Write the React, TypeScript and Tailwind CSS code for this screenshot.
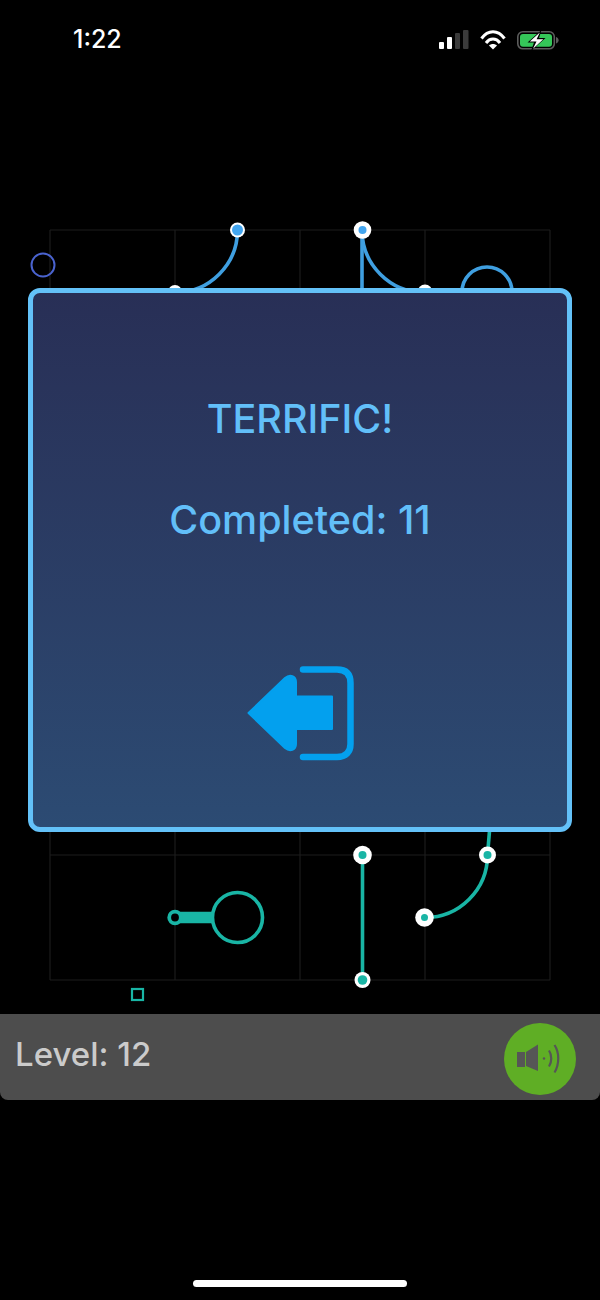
const GRID_X = [50, 175, 300, 425, 550];
const GRID_Y = [230, 355, 480, 605, 730, 855, 980];

function SignalIcon() {
  return (
    <svg width="31" height="20" viewBox="0 0 31 20" className="block">
      <rect x="1" y="12" width="5" height="7" rx="1" fill="#fff" />
      <rect x="9" y="7" width="5" height="12" rx="1" fill="#fff" />
      <rect x="17" y="3" width="5" height="16" rx="1" fill="#3a3a3a" />
      <rect x="25" y="0" width="5.500" height="19" rx="1" fill="#3a3a3a" />
    </svg>
  );
}

function WifiIcon() {
  return (
    <svg width="26" height="20" viewBox="0 0 26 20" fill="none" className="block">
      <path d="M1.500 8.500C8 -0.500 18 -0.500 24.500 8.500" stroke="#fff" strokeWidth="3" />
      <path d="M6 13C10 7.800 16 7.800 20 13" stroke="#fff" strokeWidth="3" />
      <path d="M9 15.500L13 19.500L17 15.500C14.800 13.500 11.200 13.500 9 15.500Z" fill="#fff" />
    </svg>
  );
}

function BatteryIcon() {
  return (
    <svg width="42" height="22" viewBox="0 0 42 22" fill="none" className="block">
      <rect x="0.800" y="1.800" width="36.500" height="17" rx="5" stroke="#5c5c5c" strokeWidth="1.600" />
      <rect x="3" y="4" width="32" height="12.800" rx="3" fill="#35c759" />
      <path d="M39 7v6.500c1.600-.4 2.600-1.600 2.600-3.200s-1-2.900-2.600-3.300Z" fill="#5c5c5c" />
      <path d="M24.500 0L10.500 12.500h6.500L14 21L28.500 8h-6.500L24.500 0Z" fill="#000" />
      <path d="M22.800 2.500L12.800 11.500h6.700L16 18.800L26.300 9.200h-6.700L22.800 2.500Z" fill="#fff" />
    </svg>
  );
}

function Node({ x, y, r, core, coreR }: { x: number; y: number; r: number; core: string; coreR: number }) {
  return (
    <g>
      <circle cx={x} cy={y} r={r} fill="#fff" />
      <circle cx={x} cy={y} r={coreR} fill={core} />
    </g>
  );
}

function Board() {
  const blue = "#3f9fe0";
  const teal = "#19b5a5";
  return (
    <svg width="600" height="954" viewBox="0 60 600 954" fill="none" className="block">
      {GRID_X.map((x) => (
        <line key={x} x1={x} y1={230} x2={x} y2={980} stroke="#1c1c1c" strokeWidth="1.200" />
      ))}
      {GRID_Y.map((y) => (
        <line key={y} x1={50} y1={y} x2={550} y2={y} stroke="#1c1c1c" strokeWidth="1.200" />
      ))}

      <circle cx="43" cy="265" r="11.500" stroke="#4a63cf" strokeWidth="2" />
      <path d="M237.500 230A62.500 62.500 0 0 1 175 292.500" stroke={blue} strokeWidth="3.600" />
      <path d="M362 230V292" stroke={blue} strokeWidth="3.600" />
      <path d="M362 230A62.500 62.500 0 0 0 424.500 292.500" stroke={blue} strokeWidth="3.600" />
      <circle cx="487" cy="292" r="25" stroke={blue} strokeWidth="3.600" />
      <circle cx="175" cy="292" r="7" fill="#fff" />
      <circle cx="425" cy="292" r="7.500" fill="#fff" />
      <Node x={237.500} y={230} r={7.500} core="#42a5ef" coreR={5.500} />
      <Node x={362.500} y={230} r={8.800} core="#42a5ef" coreR={4} />

      <path d="M362.500 855V980" stroke={teal} strokeWidth="3.600" />
      <path d="M490 825L487.500 855" stroke={teal} strokeWidth="3.600" />
      <path d="M487.500 855A62.500 62.500 0 0 1 425 917.500" stroke={teal} strokeWidth="3.600" />
      <path d="M175 917.500H213" stroke={teal} strokeWidth="11.500" />
      <circle cx="237.500" cy="917.500" r="25" stroke={teal} strokeWidth="3.600" />
      <circle cx="175" cy="917.500" r="5.800" fill="#000" stroke={teal} strokeWidth="3.800" />
      <Node x={362.500} y={855} r={9.300} core={teal} coreR={4} />
      <Node x={487.500} y={855} r={8.500} core={teal} coreR={4} />
      <Node x={424.500} y={917.500} r={9.300} core={teal} coreR={3.500} />
      <Node x={362.500} y={980} r={8} core={teal} coreR={4.800} />
      <rect x="132" y="989" width="11" height="11" stroke={teal} strokeWidth="2.200" />
    </svg>
  );
}

function ExitIcon() {
  return (
    <svg width="110" height="102" viewBox="0 0 110 102" fill="none" className="block">
      <path
        d="M1.500 53L38 18C43 13.500 49 16 49 22V36.500H85V69H49V84C49 90 43 92 38 88Z"
        fill="#03a0ee"
        stroke="#03a0ee"
        strokeWidth="2"
        strokeLinejoin="round"
      />
      <path
        d="M56 9.500H90C99 9.500 103.500 14 103.500 23V84C103.500 92 99 97 90 97H56"
        stroke="#03a0ee"
        strokeWidth="6.500"
        strokeLinecap="round"
      />
    </svg>
  );
}

function SoundIcon() {
  return (
    <svg width="44" height="30" viewBox="0 0 44 30" fill="none" className="block">
      <rect x="0" y="8" width="8" height="15" fill="#565656" />
      <path d="M9 8L21 0.500V27L9 22Z" fill="#565656" />
      <circle cx="27" cy="14.500" r="1.200" fill="#565656" />
      <path d="M32 6.500C35 11 35 18 32 22.500" stroke="#565656" strokeWidth="2.200" />
      <path d="M37.500 1C42.500 8.500 42.500 20 37.500 28.500" stroke="#565656" strokeWidth="2.200" />
    </svg>
  );
}

export default function App() {
  return (
    <div className="relative h-[1300px] w-[600px] overflow-hidden bg-black font-['Inter',sans-serif]">
      <div className="flex h-[60px] items-start justify-between pl-[73px] pr-[41px] pt-[26px]">
        <span className="text-[25px] leading-[27px] font-medium text-white">1:22</span>
        <div className="mt-[4px] flex items-start">
          <SignalIcon />
          <div className="ml-[11px]">
            <WifiIcon />
          </div>
          <div className="ml-[11px]">
            <BatteryIcon />
          </div>
        </div>
      </div>

      <Board />

      <div className="flex h-[86px] items-start justify-between rounded-b-[8px] bg-[#4d4d4d] pl-[15px] pr-[24px] pt-[9px]">
        <span className="mt-[11px] text-[33px] leading-[40px] font-[550] text-[#cbcbcb]">Level: 12</span>
        <div className="flex h-[72px] w-[72px] items-center justify-center rounded-full bg-[#5fae25] pr-[2px]">
          <SoundIcon />
        </div>
      </div>

      <div className="absolute left-[28px] top-[288px] flex h-[544px] w-[544px] flex-col items-center rounded-[12px] border-[5px] border-[#63c1f8] bg-gradient-to-b from-[#282f56] to-[#2c4b73]">
        <div className="mt-[104px] text-[39.500px] leading-[44px] font-[550] text-[#62bff9]">TERRIFIC!</div>
        <div className="mt-[57px] text-[39.500px] leading-[44px] font-[550] text-[#62bff9]">Completed: 11</div>
        <div className="ml-[4px] mt-[118px]">
          <ExitIcon />
        </div>
      </div>

      <div className="absolute bottom-[13px] left-[193px] h-[7px] w-[214px] rounded-full bg-white" />
    </div>
  );
}
